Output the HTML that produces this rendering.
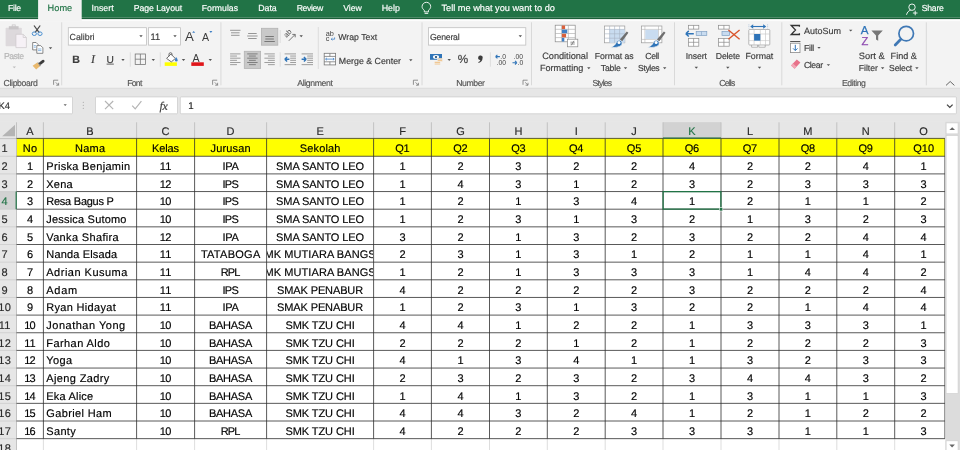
<!DOCTYPE html>
<html lang="id"><head><meta charset="utf-8"><title>Excel</title>
<style>
html,body{margin:0;padding:0;background:#fff;overflow:hidden;}
#app{position:relative;width:960px;height:450px;overflow:hidden;background:#fff;font-family:'Liberation Sans',sans-serif;}
#app div,#app svg{position:absolute;left:0;top:0;}
#app .layer{width:960px;height:450px;will-change:transform;}
.t{position:absolute;white-space:pre;line-height:1;text-rendering:geometricPrecision;-webkit-text-stroke:0.16px currentColor;}
.clip{overflow:hidden;}
</style></head>
<body>
<div id="app">
<svg class="bg" width="960" height="450" viewBox="0 0 960 450">
<rect x="0.00" y="0.00" width="960.00" height="17.70" fill="#217346"/>
<rect x="0.00" y="17.70" width="960.00" height="1.70" fill="#1b6039"/>
<rect x="0.00" y="19.40" width="960.00" height="68.40" fill="#f3f3f3"/>
<rect x="0.00" y="19.50" width="960.00" height="1.60" fill="#fcfcfc"/>
<rect x="38.10" y="0.00" width="43.60" height="21.20" fill="#f3f3f3"/>
<rect x="0.00" y="87.80" width="960.00" height="34.10" fill="#e6e6e6"/>
<rect x="0.00" y="87.80" width="960.00" height="1.10" fill="#dddddd"/>
<rect x="-2.00" y="96.90" width="74.50" height="16.90" fill="#fff" stroke="#cdcdcd" stroke-width="0.8" rx="0.8"/>
<rect x="95.50" y="96.90" width="82.00" height="16.90" fill="#fff" stroke="#cdcdcd" stroke-width="0.8" rx="0.8"/>
<rect x="180.30" y="96.90" width="776.10" height="16.90" fill="#fff" stroke="#cdcdcd" stroke-width="0.8" rx="0.8"/>
<rect x="68.30" y="27.70" width="78.20" height="17.40" fill="#fff" stroke="#c0c0c0" stroke-width="0.8"/>
<rect x="148.40" y="27.70" width="32.20" height="17.40" fill="#fff" stroke="#c0c0c0" stroke-width="0.8"/>
<rect x="428.40" y="27.70" width="97.40" height="17.40" fill="#fff" stroke="#c0c0c0" stroke-width="0.8"/>
<rect x="261.40" y="28.30" width="16.40" height="16.90" fill="#c9c9c9" stroke="#b2b2b2" stroke-width="0.8"/>
<rect x="244.30" y="51.30" width="16.30" height="17.10" fill="#c9c9c9" stroke="#b2b2b2" stroke-width="0.8"/>
<rect x="0.00" y="121.80" width="960.00" height="16.30" fill="#e6e6e6"/>
<rect x="0.00" y="138.10" width="16.50" height="311.90" fill="#e6e6e6"/>
<rect x="663.00" y="122.20" width="58.00" height="15.90" fill="#d2d2d2"/>
<rect x="0.00" y="191.55" width="16.50" height="17.65" fill="#d2d2d2"/>
<rect x="16.50" y="138.00" width="928.40" height="18.25" fill="#ffff00"/>
<line x1="43.4" y1="122.3" x2="43.4" y2="138.6" stroke="#bdbdbd" stroke-width="0.9"/>
<line x1="136.6" y1="122.3" x2="136.6" y2="138.6" stroke="#bdbdbd" stroke-width="0.9"/>
<line x1="194.6" y1="122.3" x2="194.6" y2="138.6" stroke="#bdbdbd" stroke-width="0.9"/>
<line x1="266.6" y1="122.3" x2="266.6" y2="138.6" stroke="#bdbdbd" stroke-width="0.9"/>
<line x1="373.6" y1="122.3" x2="373.6" y2="138.6" stroke="#bdbdbd" stroke-width="0.9"/>
<line x1="431.4" y1="122.3" x2="431.4" y2="138.6" stroke="#bdbdbd" stroke-width="0.9"/>
<line x1="489.5" y1="122.3" x2="489.5" y2="138.6" stroke="#bdbdbd" stroke-width="0.9"/>
<line x1="547.3" y1="122.3" x2="547.3" y2="138.6" stroke="#bdbdbd" stroke-width="0.9"/>
<line x1="605.2" y1="122.3" x2="605.2" y2="138.6" stroke="#bdbdbd" stroke-width="0.9"/>
<line x1="663" y1="122.3" x2="663" y2="138.6" stroke="#bdbdbd" stroke-width="0.9"/>
<line x1="721" y1="122.3" x2="721" y2="138.6" stroke="#bdbdbd" stroke-width="0.9"/>
<line x1="779" y1="122.3" x2="779" y2="138.6" stroke="#bdbdbd" stroke-width="0.9"/>
<line x1="836.8" y1="122.3" x2="836.8" y2="138.6" stroke="#bdbdbd" stroke-width="0.9"/>
<line x1="894.7" y1="122.3" x2="894.7" y2="138.6" stroke="#bdbdbd" stroke-width="0.9"/>
<line x1="16.5" y1="122.3" x2="16.5" y2="450" stroke="#bdbdbd" stroke-width="0.9"/>
<line x1="0" y1="138.6" x2="944.9" y2="138.6" stroke="#bdbdbd" stroke-width="0.9"/>
<line x1="0" y1="156.25" x2="16.5" y2="156.25" stroke="#cbcbcb" stroke-width="0.8"/>
<line x1="0" y1="173.90" x2="16.5" y2="173.90" stroke="#cbcbcb" stroke-width="0.8"/>
<line x1="0" y1="191.55" x2="16.5" y2="191.55" stroke="#cbcbcb" stroke-width="0.8"/>
<line x1="0" y1="209.20" x2="16.5" y2="209.20" stroke="#cbcbcb" stroke-width="0.8"/>
<line x1="0" y1="226.85" x2="16.5" y2="226.85" stroke="#cbcbcb" stroke-width="0.8"/>
<line x1="0" y1="244.50" x2="16.5" y2="244.50" stroke="#cbcbcb" stroke-width="0.8"/>
<line x1="0" y1="262.15" x2="16.5" y2="262.15" stroke="#cbcbcb" stroke-width="0.8"/>
<line x1="0" y1="279.80" x2="16.5" y2="279.80" stroke="#cbcbcb" stroke-width="0.8"/>
<line x1="0" y1="297.45" x2="16.5" y2="297.45" stroke="#cbcbcb" stroke-width="0.8"/>
<line x1="0" y1="315.10" x2="16.5" y2="315.10" stroke="#cbcbcb" stroke-width="0.8"/>
<line x1="0" y1="332.75" x2="16.5" y2="332.75" stroke="#cbcbcb" stroke-width="0.8"/>
<line x1="0" y1="350.40" x2="16.5" y2="350.40" stroke="#cbcbcb" stroke-width="0.8"/>
<line x1="0" y1="368.05" x2="16.5" y2="368.05" stroke="#cbcbcb" stroke-width="0.8"/>
<line x1="0" y1="385.70" x2="16.5" y2="385.70" stroke="#cbcbcb" stroke-width="0.8"/>
<line x1="0" y1="403.35" x2="16.5" y2="403.35" stroke="#cbcbcb" stroke-width="0.8"/>
<line x1="0" y1="421.00" x2="16.5" y2="421.00" stroke="#cbcbcb" stroke-width="0.8"/>
<line x1="0" y1="438.65" x2="16.5" y2="438.65" stroke="#cbcbcb" stroke-width="0.8"/>
<line x1="43.4" y1="438.65" x2="43.4" y2="450" stroke="#d4d4d4" stroke-width="0.8"/>
<line x1="136.6" y1="438.65" x2="136.6" y2="450" stroke="#d4d4d4" stroke-width="0.8"/>
<line x1="194.6" y1="438.65" x2="194.6" y2="450" stroke="#d4d4d4" stroke-width="0.8"/>
<line x1="266.6" y1="438.65" x2="266.6" y2="450" stroke="#d4d4d4" stroke-width="0.8"/>
<line x1="373.6" y1="438.65" x2="373.6" y2="450" stroke="#d4d4d4" stroke-width="0.8"/>
<line x1="431.4" y1="438.65" x2="431.4" y2="450" stroke="#d4d4d4" stroke-width="0.8"/>
<line x1="489.5" y1="438.65" x2="489.5" y2="450" stroke="#d4d4d4" stroke-width="0.8"/>
<line x1="547.3" y1="438.65" x2="547.3" y2="450" stroke="#d4d4d4" stroke-width="0.8"/>
<line x1="605.2" y1="438.65" x2="605.2" y2="450" stroke="#d4d4d4" stroke-width="0.8"/>
<line x1="663" y1="438.65" x2="663" y2="450" stroke="#d4d4d4" stroke-width="0.8"/>
<line x1="721" y1="438.65" x2="721" y2="450" stroke="#d4d4d4" stroke-width="0.8"/>
<line x1="779" y1="438.65" x2="779" y2="450" stroke="#d4d4d4" stroke-width="0.8"/>
<line x1="836.8" y1="438.65" x2="836.8" y2="450" stroke="#d4d4d4" stroke-width="0.8"/>
<line x1="894.7" y1="438.65" x2="894.7" y2="450" stroke="#d4d4d4" stroke-width="0.8"/>
<line x1="16.5" y1="138.4" x2="944.9" y2="138.4" stroke="#55551a" stroke-width="0.9"/>
<line x1="16.5" y1="156.25" x2="944.9" y2="156.25" stroke="#2e2e2e" stroke-width="0.8"/>
<line x1="16.5" y1="173.90" x2="944.9" y2="173.90" stroke="#2e2e2e" stroke-width="0.8"/>
<line x1="16.5" y1="191.55" x2="944.9" y2="191.55" stroke="#2e2e2e" stroke-width="0.8"/>
<line x1="16.5" y1="209.20" x2="944.9" y2="209.20" stroke="#2e2e2e" stroke-width="0.8"/>
<line x1="16.5" y1="226.85" x2="944.9" y2="226.85" stroke="#2e2e2e" stroke-width="0.8"/>
<line x1="16.5" y1="244.50" x2="944.9" y2="244.50" stroke="#2e2e2e" stroke-width="0.8"/>
<line x1="16.5" y1="262.15" x2="944.9" y2="262.15" stroke="#2e2e2e" stroke-width="0.8"/>
<line x1="16.5" y1="279.80" x2="944.9" y2="279.80" stroke="#2e2e2e" stroke-width="0.8"/>
<line x1="16.5" y1="297.45" x2="944.9" y2="297.45" stroke="#2e2e2e" stroke-width="0.8"/>
<line x1="16.5" y1="315.10" x2="944.9" y2="315.10" stroke="#2e2e2e" stroke-width="0.8"/>
<line x1="16.5" y1="332.75" x2="944.9" y2="332.75" stroke="#2e2e2e" stroke-width="0.8"/>
<line x1="16.5" y1="350.40" x2="944.9" y2="350.40" stroke="#2e2e2e" stroke-width="0.8"/>
<line x1="16.5" y1="368.05" x2="944.9" y2="368.05" stroke="#2e2e2e" stroke-width="0.8"/>
<line x1="16.5" y1="385.70" x2="944.9" y2="385.70" stroke="#2e2e2e" stroke-width="0.8"/>
<line x1="16.5" y1="403.35" x2="944.9" y2="403.35" stroke="#2e2e2e" stroke-width="0.8"/>
<line x1="16.5" y1="421.00" x2="944.9" y2="421.00" stroke="#2e2e2e" stroke-width="0.8"/>
<line x1="16.5" y1="438.65" x2="944.9" y2="438.65" stroke="#2e2e2e" stroke-width="0.8"/>
<line x1="43.4" y1="138.6" x2="43.4" y2="438.65" stroke="#2e2e2e" stroke-width="0.8"/>
<line x1="136.6" y1="138.6" x2="136.6" y2="438.65" stroke="#2e2e2e" stroke-width="0.8"/>
<line x1="194.6" y1="138.6" x2="194.6" y2="438.65" stroke="#2e2e2e" stroke-width="0.8"/>
<line x1="266.6" y1="138.6" x2="266.6" y2="438.65" stroke="#2e2e2e" stroke-width="0.8"/>
<line x1="373.6" y1="138.6" x2="373.6" y2="438.65" stroke="#2e2e2e" stroke-width="0.8"/>
<line x1="431.4" y1="138.6" x2="431.4" y2="438.65" stroke="#2e2e2e" stroke-width="0.8"/>
<line x1="489.5" y1="138.6" x2="489.5" y2="438.65" stroke="#2e2e2e" stroke-width="0.8"/>
<line x1="547.3" y1="138.6" x2="547.3" y2="438.65" stroke="#2e2e2e" stroke-width="0.8"/>
<line x1="605.2" y1="138.6" x2="605.2" y2="438.65" stroke="#2e2e2e" stroke-width="0.8"/>
<line x1="663" y1="138.6" x2="663" y2="438.65" stroke="#2e2e2e" stroke-width="0.8"/>
<line x1="721" y1="138.6" x2="721" y2="438.65" stroke="#2e2e2e" stroke-width="0.8"/>
<line x1="779" y1="138.6" x2="779" y2="438.65" stroke="#2e2e2e" stroke-width="0.8"/>
<line x1="836.8" y1="138.6" x2="836.8" y2="438.65" stroke="#2e2e2e" stroke-width="0.8"/>
<line x1="894.7" y1="138.6" x2="894.7" y2="438.65" stroke="#2e2e2e" stroke-width="0.8"/>
<line x1="944.9" y1="138.6" x2="944.9" y2="438.65" stroke="#2e2e2e" stroke-width="0.8"/>
<!-- selection -->
<line x1="663" y1="138.0" x2="721" y2="138.0" stroke="#217346" stroke-width="1.2"/>
<line x1="16.2" y1="191.55" x2="16.2" y2="209.20" stroke="#217346" stroke-width="1.2"/>
<rect x="663.1" y="191.65" width="57.8" height="17.45" fill="none" stroke="#217346" stroke-width="1.3"/>
<rect x="719.4" y="207.60" width="3.4" height="3.4" fill="#217346" stroke="#fff" stroke-width="0.6"/>
<rect x="945.30" y="121.80" width="15.10" height="328.20" fill="#dcdcdc"/>
</svg>
<div class="layer sheet">
<div class="row r1"><span class="t" style="left:22.75px;top:144px;font-size:11.0px;color:#000;letter-spacing:0.338px;">No</span><span class="t" style="left:75.00px;top:144px;font-size:11.0px;color:#000;letter-spacing:0.219px;">Nama</span><span class="t" style="left:152.10px;top:144px;font-size:11.0px;color:#000;letter-spacing:-0.133px;">Kelas</span><span class="t" style="left:210.60px;top:144px;font-size:11.0px;color:#000;letter-spacing:0.143px;">Jurusan</span><span class="t" style="left:299.80px;top:144px;font-size:11.0px;color:#000;letter-spacing:0.139px;">Sekolah</span><span class="t" style="left:395.25px;top:144px;font-size:11.0px;color:#000;letter-spacing:-0.188px;">Q1</span><span class="t" style="left:453.20px;top:144px;font-size:11.0px;color:#000;letter-spacing:-0.188px;">Q2</span><span class="t" style="left:511.15px;top:144px;font-size:11.0px;color:#000;letter-spacing:-0.188px;">Q3</span><span class="t" style="left:569.00px;top:144px;font-size:11.0px;color:#000;letter-spacing:-0.188px;">Q4</span><span class="t" style="left:626.85px;top:144px;font-size:11.0px;color:#000;letter-spacing:-0.188px;">Q5</span><span class="t" style="left:684.75px;top:144px;font-size:11.0px;color:#000;letter-spacing:-0.188px;">Q6</span><span class="t" style="left:742.75px;top:144px;font-size:11.0px;color:#000;letter-spacing:-0.188px;">Q7</span><span class="t" style="left:800.65px;top:144px;font-size:11.0px;color:#000;letter-spacing:-0.188px;">Q8</span><span class="t" style="left:858.50px;top:144px;font-size:11.0px;color:#000;letter-spacing:-0.188px;">Q9</span><span class="t" style="left:913.20px;top:144px;font-size:11.0px;color:#000;letter-spacing:0.052px;">Q10</span></div>
<div class="row r2"><span class="t" style="left:26.89px;top:162px;font-size:11.0px;color:#000;">1</span><span class="t" style="left:46.30px;top:162px;font-size:11.0px;color:#000;letter-spacing:0.315px;">Priska Benjamin</span><span class="t" style="left:159.85px;top:162px;font-size:11.0px;color:#000;letter-spacing:0.078px;">11</span><span class="t" style="left:222.45px;top:162px;font-size:11.0px;color:#000;letter-spacing:-0.311px;">IPA</span><span class="t" style="left:276.05px;top:162px;font-size:11.0px;color:#000;letter-spacing:-0.080px;">SMA SANTO LEO</span><span class="t" style="left:399.44px;top:162px;font-size:11.0px;color:#000;">1</span><span class="t" style="left:457.39px;top:162px;font-size:11.0px;color:#000;">2</span><span class="t" style="left:515.34px;top:162px;font-size:11.0px;color:#000;">3</span><span class="t" style="left:573.19px;top:162px;font-size:11.0px;color:#000;">2</span><span class="t" style="left:631.04px;top:162px;font-size:11.0px;color:#000;">2</span><span class="t" style="left:688.94px;top:162px;font-size:11.0px;color:#000;">4</span><span class="t" style="left:746.94px;top:162px;font-size:11.0px;color:#000;">2</span><span class="t" style="left:804.84px;top:162px;font-size:11.0px;color:#000;">2</span><span class="t" style="left:862.69px;top:162px;font-size:11.0px;color:#000;">4</span><span class="t" style="left:920.59px;top:162px;font-size:11.0px;color:#000;">1</span></div>
<div class="row r3"><span class="t" style="left:26.89px;top:180px;font-size:11.0px;color:#000;">2</span><span class="t" style="left:46.30px;top:180px;font-size:11.0px;color:#000;letter-spacing:0.199px;">Xena</span><span class="t" style="left:159.85px;top:180px;font-size:11.0px;color:#000;letter-spacing:-0.750px;">12</span><span class="t" style="left:222.45px;top:180px;font-size:11.0px;color:#000;letter-spacing:-0.717px;">IPS</span><span class="t" style="left:276.05px;top:180px;font-size:11.0px;color:#000;letter-spacing:-0.080px;">SMA SANTO LEO</span><span class="t" style="left:399.44px;top:180px;font-size:11.0px;color:#000;">1</span><span class="t" style="left:457.39px;top:180px;font-size:11.0px;color:#000;">4</span><span class="t" style="left:515.34px;top:180px;font-size:11.0px;color:#000;">3</span><span class="t" style="left:573.19px;top:180px;font-size:11.0px;color:#000;">1</span><span class="t" style="left:631.04px;top:180px;font-size:11.0px;color:#000;">2</span><span class="t" style="left:688.94px;top:180px;font-size:11.0px;color:#000;">3</span><span class="t" style="left:746.94px;top:180px;font-size:11.0px;color:#000;">2</span><span class="t" style="left:804.84px;top:180px;font-size:11.0px;color:#000;">3</span><span class="t" style="left:862.69px;top:180px;font-size:11.0px;color:#000;">3</span><span class="t" style="left:920.59px;top:180px;font-size:11.0px;color:#000;">3</span></div>
<div class="row r4"><span class="t" style="left:26.89px;top:197px;font-size:11.0px;color:#000;">3</span><span class="t" style="left:46.30px;top:197px;font-size:11.0px;color:#000;letter-spacing:-0.248px;">Resa Bagus P</span><span class="t" style="left:159.85px;top:197px;font-size:11.0px;color:#000;letter-spacing:-0.750px;">10</span><span class="t" style="left:222.45px;top:197px;font-size:11.0px;color:#000;letter-spacing:-0.717px;">IPS</span><span class="t" style="left:276.05px;top:197px;font-size:11.0px;color:#000;letter-spacing:-0.080px;">SMA SANTO LEO</span><span class="t" style="left:399.44px;top:197px;font-size:11.0px;color:#000;">1</span><span class="t" style="left:457.39px;top:197px;font-size:11.0px;color:#000;">2</span><span class="t" style="left:515.34px;top:197px;font-size:11.0px;color:#000;">1</span><span class="t" style="left:573.19px;top:197px;font-size:11.0px;color:#000;">3</span><span class="t" style="left:631.04px;top:197px;font-size:11.0px;color:#000;">4</span><span class="t" style="left:688.94px;top:197px;font-size:11.0px;color:#000;">1</span><span class="t" style="left:746.94px;top:197px;font-size:11.0px;color:#000;">2</span><span class="t" style="left:804.84px;top:197px;font-size:11.0px;color:#000;">1</span><span class="t" style="left:862.69px;top:197px;font-size:11.0px;color:#000;">1</span><span class="t" style="left:920.59px;top:197px;font-size:11.0px;color:#000;">2</span></div>
<div class="row r5"><span class="t" style="left:26.89px;top:215px;font-size:11.0px;color:#000;">4</span><span class="t" style="left:46.30px;top:215px;font-size:11.0px;color:#000;letter-spacing:0.196px;">Jessica Sutomo</span><span class="t" style="left:159.85px;top:215px;font-size:11.0px;color:#000;letter-spacing:-0.750px;">10</span><span class="t" style="left:222.45px;top:215px;font-size:11.0px;color:#000;letter-spacing:-0.717px;">IPS</span><span class="t" style="left:276.05px;top:215px;font-size:11.0px;color:#000;letter-spacing:-0.080px;">SMA SANTO LEO</span><span class="t" style="left:399.44px;top:215px;font-size:11.0px;color:#000;">1</span><span class="t" style="left:457.39px;top:215px;font-size:11.0px;color:#000;">2</span><span class="t" style="left:515.34px;top:215px;font-size:11.0px;color:#000;">3</span><span class="t" style="left:573.19px;top:215px;font-size:11.0px;color:#000;">1</span><span class="t" style="left:631.04px;top:215px;font-size:11.0px;color:#000;">3</span><span class="t" style="left:688.94px;top:215px;font-size:11.0px;color:#000;">2</span><span class="t" style="left:746.94px;top:215px;font-size:11.0px;color:#000;">1</span><span class="t" style="left:804.84px;top:215px;font-size:11.0px;color:#000;">3</span><span class="t" style="left:862.69px;top:215px;font-size:11.0px;color:#000;">2</span><span class="t" style="left:920.59px;top:215px;font-size:11.0px;color:#000;">3</span></div>
<div class="row r6"><span class="t" style="left:26.89px;top:233px;font-size:11.0px;color:#000;">5</span><span class="t" style="left:46.30px;top:233px;font-size:11.0px;color:#000;letter-spacing:0.342px;">Vanka Shafira</span><span class="t" style="left:159.85px;top:233px;font-size:11.0px;color:#000;letter-spacing:-0.750px;">12</span><span class="t" style="left:222.45px;top:233px;font-size:11.0px;color:#000;letter-spacing:-0.311px;">IPA</span><span class="t" style="left:276.05px;top:233px;font-size:11.0px;color:#000;letter-spacing:-0.080px;">SMA SANTO LEO</span><span class="t" style="left:399.44px;top:233px;font-size:11.0px;color:#000;">3</span><span class="t" style="left:457.39px;top:233px;font-size:11.0px;color:#000;">2</span><span class="t" style="left:515.34px;top:233px;font-size:11.0px;color:#000;">1</span><span class="t" style="left:573.19px;top:233px;font-size:11.0px;color:#000;">3</span><span class="t" style="left:631.04px;top:233px;font-size:11.0px;color:#000;">2</span><span class="t" style="left:688.94px;top:233px;font-size:11.0px;color:#000;">3</span><span class="t" style="left:746.94px;top:233px;font-size:11.0px;color:#000;">2</span><span class="t" style="left:804.84px;top:233px;font-size:11.0px;color:#000;">2</span><span class="t" style="left:862.69px;top:233px;font-size:11.0px;color:#000;">4</span><span class="t" style="left:920.59px;top:233px;font-size:11.0px;color:#000;">4</span></div>
<div class="row r7"><span class="t" style="left:26.89px;top:250px;font-size:11.0px;color:#000;">6</span><span class="t" style="left:46.30px;top:250px;font-size:11.0px;color:#000;letter-spacing:0.163px;">Nanda Elsada</span><span class="t" style="left:159.85px;top:250px;font-size:11.0px;color:#000;letter-spacing:0.078px;">11</span><span class="t" style="left:200.90px;top:250px;font-size:11.0px;color:#000;letter-spacing:0.278px;">TATABOGA</span><div class="clip" style="left:267.20px;top:244px;width:106.00px;height:18.65px"><span class="t" style="left:-10.10px;top:6px;font-size:11.0px;color:#000;letter-spacing:0.076px;">SMK MUTIARA BANGSA</span></div><span class="t" style="left:399.44px;top:250px;font-size:11.0px;color:#000;">2</span><span class="t" style="left:457.39px;top:250px;font-size:11.0px;color:#000;">3</span><span class="t" style="left:515.34px;top:250px;font-size:11.0px;color:#000;">1</span><span class="t" style="left:573.19px;top:250px;font-size:11.0px;color:#000;">3</span><span class="t" style="left:631.04px;top:250px;font-size:11.0px;color:#000;">1</span><span class="t" style="left:688.94px;top:250px;font-size:11.0px;color:#000;">2</span><span class="t" style="left:746.94px;top:250px;font-size:11.0px;color:#000;">1</span><span class="t" style="left:804.84px;top:250px;font-size:11.0px;color:#000;">1</span><span class="t" style="left:862.69px;top:250px;font-size:11.0px;color:#000;">4</span><span class="t" style="left:920.59px;top:250px;font-size:11.0px;color:#000;">1</span></div>
<div class="row r8"><span class="t" style="left:26.89px;top:268px;font-size:11.0px;color:#000;">7</span><span class="t" style="left:46.30px;top:268px;font-size:11.0px;color:#000;letter-spacing:0.490px;">Adrian Kusuma</span><span class="t" style="left:159.85px;top:268px;font-size:11.0px;color:#000;letter-spacing:0.078px;">11</span><span class="t" style="left:220.80px;top:268px;font-size:11.0px;color:#000;letter-spacing:-0.903px;">RPL</span><div class="clip" style="left:267.20px;top:262px;width:106.00px;height:18.65px"><span class="t" style="left:-10.10px;top:6px;font-size:11.0px;color:#000;letter-spacing:0.076px;">SMK MUTIARA BANGSA</span></div><span class="t" style="left:399.44px;top:268px;font-size:11.0px;color:#000;">1</span><span class="t" style="left:457.39px;top:268px;font-size:11.0px;color:#000;">2</span><span class="t" style="left:515.34px;top:268px;font-size:11.0px;color:#000;">1</span><span class="t" style="left:573.19px;top:268px;font-size:11.0px;color:#000;">3</span><span class="t" style="left:631.04px;top:268px;font-size:11.0px;color:#000;">3</span><span class="t" style="left:688.94px;top:268px;font-size:11.0px;color:#000;">3</span><span class="t" style="left:746.94px;top:268px;font-size:11.0px;color:#000;">1</span><span class="t" style="left:804.84px;top:268px;font-size:11.0px;color:#000;">4</span><span class="t" style="left:862.69px;top:268px;font-size:11.0px;color:#000;">4</span><span class="t" style="left:920.59px;top:268px;font-size:11.0px;color:#000;">2</span></div>
<div class="row r9"><span class="t" style="left:26.89px;top:286px;font-size:11.0px;color:#000;">8</span><span class="t" style="left:46.30px;top:286px;font-size:11.0px;color:#000;letter-spacing:0.717px;">Adam</span><span class="t" style="left:159.85px;top:286px;font-size:11.0px;color:#000;letter-spacing:0.078px;">11</span><span class="t" style="left:222.45px;top:286px;font-size:11.0px;color:#000;letter-spacing:-0.717px;">IPS</span><span class="t" style="left:277.05px;top:286px;font-size:11.0px;color:#000;letter-spacing:-0.120px;">SMAK PENABUR</span><span class="t" style="left:399.44px;top:286px;font-size:11.0px;color:#000;">4</span><span class="t" style="left:457.39px;top:286px;font-size:11.0px;color:#000;">2</span><span class="t" style="left:515.34px;top:286px;font-size:11.0px;color:#000;">2</span><span class="t" style="left:573.19px;top:286px;font-size:11.0px;color:#000;">2</span><span class="t" style="left:631.04px;top:286px;font-size:11.0px;color:#000;">2</span><span class="t" style="left:688.94px;top:286px;font-size:11.0px;color:#000;">3</span><span class="t" style="left:746.94px;top:286px;font-size:11.0px;color:#000;">2</span><span class="t" style="left:804.84px;top:286px;font-size:11.0px;color:#000;">2</span><span class="t" style="left:862.69px;top:286px;font-size:11.0px;color:#000;">2</span><span class="t" style="left:920.59px;top:286px;font-size:11.0px;color:#000;">4</span></div>
<div class="row r10"><span class="t" style="left:26.89px;top:303px;font-size:11.0px;color:#000;">9</span><span class="t" style="left:46.30px;top:303px;font-size:11.0px;color:#000;letter-spacing:0.314px;">Ryan Hidayat</span><span class="t" style="left:159.85px;top:303px;font-size:11.0px;color:#000;letter-spacing:0.078px;">11</span><span class="t" style="left:222.45px;top:303px;font-size:11.0px;color:#000;letter-spacing:-0.311px;">IPA</span><span class="t" style="left:277.05px;top:303px;font-size:11.0px;color:#000;letter-spacing:-0.120px;">SMAK PENABUR</span><span class="t" style="left:399.44px;top:303px;font-size:11.0px;color:#000;">1</span><span class="t" style="left:457.39px;top:303px;font-size:11.0px;color:#000;">2</span><span class="t" style="left:515.34px;top:303px;font-size:11.0px;color:#000;">3</span><span class="t" style="left:573.19px;top:303px;font-size:11.0px;color:#000;">1</span><span class="t" style="left:631.04px;top:303px;font-size:11.0px;color:#000;">3</span><span class="t" style="left:688.94px;top:303px;font-size:11.0px;color:#000;">2</span><span class="t" style="left:746.94px;top:303px;font-size:11.0px;color:#000;">2</span><span class="t" style="left:804.84px;top:303px;font-size:11.0px;color:#000;">1</span><span class="t" style="left:862.69px;top:303px;font-size:11.0px;color:#000;">4</span><span class="t" style="left:920.59px;top:303px;font-size:11.0px;color:#000;">4</span></div>
<div class="row r11"><span class="t" style="left:24.20px;top:321px;font-size:11.0px;color:#000;letter-spacing:-0.750px;">10</span><span class="t" style="left:46.30px;top:321px;font-size:11.0px;color:#000;letter-spacing:0.507px;">Jonathan Yong</span><span class="t" style="left:159.85px;top:321px;font-size:11.0px;color:#000;letter-spacing:-0.750px;">10</span><span class="t" style="left:208.95px;top:321px;font-size:11.0px;color:#000;letter-spacing:-0.268px;">BAHASA</span><span class="t" style="left:285.50px;top:321px;font-size:11.0px;color:#000;letter-spacing:-0.088px;">SMK TZU CHI</span><span class="t" style="left:399.44px;top:321px;font-size:11.0px;color:#000;">4</span><span class="t" style="left:457.39px;top:321px;font-size:11.0px;color:#000;">4</span><span class="t" style="left:515.34px;top:321px;font-size:11.0px;color:#000;">1</span><span class="t" style="left:573.19px;top:321px;font-size:11.0px;color:#000;">2</span><span class="t" style="left:631.04px;top:321px;font-size:11.0px;color:#000;">2</span><span class="t" style="left:688.94px;top:321px;font-size:11.0px;color:#000;">1</span><span class="t" style="left:746.94px;top:321px;font-size:11.0px;color:#000;">3</span><span class="t" style="left:804.84px;top:321px;font-size:11.0px;color:#000;">3</span><span class="t" style="left:862.69px;top:321px;font-size:11.0px;color:#000;">3</span><span class="t" style="left:920.59px;top:321px;font-size:11.0px;color:#000;">1</span></div>
<div class="row r12"><span class="t" style="left:24.20px;top:339px;font-size:11.0px;color:#000;letter-spacing:0.078px;">11</span><span class="t" style="left:46.30px;top:339px;font-size:11.0px;color:#000;letter-spacing:0.427px;">Farhan Aldo</span><span class="t" style="left:159.85px;top:339px;font-size:11.0px;color:#000;letter-spacing:-0.750px;">10</span><span class="t" style="left:208.95px;top:339px;font-size:11.0px;color:#000;letter-spacing:-0.268px;">BAHASA</span><span class="t" style="left:285.50px;top:339px;font-size:11.0px;color:#000;letter-spacing:-0.088px;">SMK TZU CHI</span><span class="t" style="left:399.44px;top:339px;font-size:11.0px;color:#000;">2</span><span class="t" style="left:457.39px;top:339px;font-size:11.0px;color:#000;">2</span><span class="t" style="left:515.34px;top:339px;font-size:11.0px;color:#000;">2</span><span class="t" style="left:573.19px;top:339px;font-size:11.0px;color:#000;">1</span><span class="t" style="left:631.04px;top:339px;font-size:11.0px;color:#000;">2</span><span class="t" style="left:688.94px;top:339px;font-size:11.0px;color:#000;">1</span><span class="t" style="left:746.94px;top:339px;font-size:11.0px;color:#000;">2</span><span class="t" style="left:804.84px;top:339px;font-size:11.0px;color:#000;">2</span><span class="t" style="left:862.69px;top:339px;font-size:11.0px;color:#000;">2</span><span class="t" style="left:920.59px;top:339px;font-size:11.0px;color:#000;">3</span></div>
<div class="row r13"><span class="t" style="left:24.20px;top:356px;font-size:11.0px;color:#000;letter-spacing:-0.750px;">12</span><span class="t" style="left:46.30px;top:356px;font-size:11.0px;color:#000;letter-spacing:0.371px;">Yoga</span><span class="t" style="left:159.85px;top:356px;font-size:11.0px;color:#000;letter-spacing:-0.750px;">10</span><span class="t" style="left:208.95px;top:356px;font-size:11.0px;color:#000;letter-spacing:-0.268px;">BAHASA</span><span class="t" style="left:285.50px;top:356px;font-size:11.0px;color:#000;letter-spacing:-0.088px;">SMK TZU CHI</span><span class="t" style="left:399.44px;top:356px;font-size:11.0px;color:#000;">4</span><span class="t" style="left:457.39px;top:356px;font-size:11.0px;color:#000;">1</span><span class="t" style="left:515.34px;top:356px;font-size:11.0px;color:#000;">3</span><span class="t" style="left:573.19px;top:356px;font-size:11.0px;color:#000;">4</span><span class="t" style="left:631.04px;top:356px;font-size:11.0px;color:#000;">1</span><span class="t" style="left:688.94px;top:356px;font-size:11.0px;color:#000;">1</span><span class="t" style="left:746.94px;top:356px;font-size:11.0px;color:#000;">3</span><span class="t" style="left:804.84px;top:356px;font-size:11.0px;color:#000;">2</span><span class="t" style="left:862.69px;top:356px;font-size:11.0px;color:#000;">3</span><span class="t" style="left:920.59px;top:356px;font-size:11.0px;color:#000;">3</span></div>
<div class="row r14"><span class="t" style="left:24.20px;top:374px;font-size:11.0px;color:#000;letter-spacing:-0.750px;">13</span><span class="t" style="left:46.30px;top:374px;font-size:11.0px;color:#000;letter-spacing:0.359px;">Ajeng Zadry</span><span class="t" style="left:159.85px;top:374px;font-size:11.0px;color:#000;letter-spacing:-0.750px;">10</span><span class="t" style="left:208.95px;top:374px;font-size:11.0px;color:#000;letter-spacing:-0.268px;">BAHASA</span><span class="t" style="left:285.50px;top:374px;font-size:11.0px;color:#000;letter-spacing:-0.088px;">SMK TZU CHI</span><span class="t" style="left:399.44px;top:374px;font-size:11.0px;color:#000;">2</span><span class="t" style="left:457.39px;top:374px;font-size:11.0px;color:#000;">3</span><span class="t" style="left:515.34px;top:374px;font-size:11.0px;color:#000;">2</span><span class="t" style="left:573.19px;top:374px;font-size:11.0px;color:#000;">3</span><span class="t" style="left:631.04px;top:374px;font-size:11.0px;color:#000;">2</span><span class="t" style="left:688.94px;top:374px;font-size:11.0px;color:#000;">3</span><span class="t" style="left:746.94px;top:374px;font-size:11.0px;color:#000;">4</span><span class="t" style="left:804.84px;top:374px;font-size:11.0px;color:#000;">4</span><span class="t" style="left:862.69px;top:374px;font-size:11.0px;color:#000;">3</span><span class="t" style="left:920.59px;top:374px;font-size:11.0px;color:#000;">2</span></div>
<div class="row r15"><span class="t" style="left:24.20px;top:392px;font-size:11.0px;color:#000;letter-spacing:-0.750px;">14</span><span class="t" style="left:46.30px;top:392px;font-size:11.0px;color:#000;letter-spacing:0.194px;">Eka Alice</span><span class="t" style="left:159.85px;top:392px;font-size:11.0px;color:#000;letter-spacing:-0.750px;">10</span><span class="t" style="left:208.95px;top:392px;font-size:11.0px;color:#000;letter-spacing:-0.268px;">BAHASA</span><span class="t" style="left:285.50px;top:392px;font-size:11.0px;color:#000;letter-spacing:-0.088px;">SMK TZU CHI</span><span class="t" style="left:399.44px;top:392px;font-size:11.0px;color:#000;">1</span><span class="t" style="left:457.39px;top:392px;font-size:11.0px;color:#000;">4</span><span class="t" style="left:515.34px;top:392px;font-size:11.0px;color:#000;">1</span><span class="t" style="left:573.19px;top:392px;font-size:11.0px;color:#000;">3</span><span class="t" style="left:631.04px;top:392px;font-size:11.0px;color:#000;">2</span><span class="t" style="left:688.94px;top:392px;font-size:11.0px;color:#000;">1</span><span class="t" style="left:746.94px;top:392px;font-size:11.0px;color:#000;">3</span><span class="t" style="left:804.84px;top:392px;font-size:11.0px;color:#000;">1</span><span class="t" style="left:862.69px;top:392px;font-size:11.0px;color:#000;">1</span><span class="t" style="left:920.59px;top:392px;font-size:11.0px;color:#000;">3</span></div>
<div class="row r16"><span class="t" style="left:24.20px;top:409px;font-size:11.0px;color:#000;letter-spacing:-0.750px;">15</span><span class="t" style="left:46.30px;top:409px;font-size:11.0px;color:#000;letter-spacing:0.355px;">Gabriel Ham</span><span class="t" style="left:159.85px;top:409px;font-size:11.0px;color:#000;letter-spacing:-0.750px;">10</span><span class="t" style="left:208.95px;top:409px;font-size:11.0px;color:#000;letter-spacing:-0.268px;">BAHASA</span><span class="t" style="left:285.50px;top:409px;font-size:11.0px;color:#000;letter-spacing:-0.088px;">SMK TZU CHI</span><span class="t" style="left:399.44px;top:409px;font-size:11.0px;color:#000;">4</span><span class="t" style="left:457.39px;top:409px;font-size:11.0px;color:#000;">4</span><span class="t" style="left:515.34px;top:409px;font-size:11.0px;color:#000;">3</span><span class="t" style="left:573.19px;top:409px;font-size:11.0px;color:#000;">2</span><span class="t" style="left:631.04px;top:409px;font-size:11.0px;color:#000;">4</span><span class="t" style="left:688.94px;top:409px;font-size:11.0px;color:#000;">1</span><span class="t" style="left:746.94px;top:409px;font-size:11.0px;color:#000;">2</span><span class="t" style="left:804.84px;top:409px;font-size:11.0px;color:#000;">1</span><span class="t" style="left:862.69px;top:409px;font-size:11.0px;color:#000;">2</span><span class="t" style="left:920.59px;top:409px;font-size:11.0px;color:#000;">2</span></div>
<div class="row r17"><span class="t" style="left:24.20px;top:427px;font-size:11.0px;color:#000;letter-spacing:-0.750px;">16</span><span class="t" style="left:46.30px;top:427px;font-size:11.0px;color:#000;letter-spacing:0.315px;">Santy</span><span class="t" style="left:159.85px;top:427px;font-size:11.0px;color:#000;letter-spacing:-0.750px;">10</span><span class="t" style="left:220.80px;top:427px;font-size:11.0px;color:#000;letter-spacing:-0.903px;">RPL</span><span class="t" style="left:285.50px;top:427px;font-size:11.0px;color:#000;letter-spacing:-0.088px;">SMK TZU CHI</span><span class="t" style="left:399.44px;top:427px;font-size:11.0px;color:#000;">4</span><span class="t" style="left:457.39px;top:427px;font-size:11.0px;color:#000;">2</span><span class="t" style="left:515.34px;top:427px;font-size:11.0px;color:#000;">2</span><span class="t" style="left:573.19px;top:427px;font-size:11.0px;color:#000;">2</span><span class="t" style="left:631.04px;top:427px;font-size:11.0px;color:#000;">3</span><span class="t" style="left:688.94px;top:427px;font-size:11.0px;color:#000;">3</span><span class="t" style="left:746.94px;top:427px;font-size:11.0px;color:#000;">3</span><span class="t" style="left:804.84px;top:427px;font-size:11.0px;color:#000;">1</span><span class="t" style="left:862.69px;top:427px;font-size:11.0px;color:#000;">1</span><span class="t" style="left:920.59px;top:427px;font-size:11.0px;color:#000;">3</span></div>
<div class="colheads"><span class="t" style="left:26.28px;top:127px;font-size:11.0px;color:#2a2a2a;">A</span><span class="t" style="left:86.33px;top:127px;font-size:11.0px;color:#2a2a2a;">B</span><span class="t" style="left:161.62px;top:127px;font-size:11.0px;color:#2a2a2a;">C</span><span class="t" style="left:226.62px;top:127px;font-size:11.0px;color:#2a2a2a;">D</span><span class="t" style="left:316.43px;top:127px;font-size:11.0px;color:#2a2a2a;">E</span><span class="t" style="left:399.13px;top:127px;font-size:11.0px;color:#2a2a2a;">F</span><span class="t" style="left:456.17px;top:127px;font-size:11.0px;color:#2a2a2a;">G</span><span class="t" style="left:514.42px;top:127px;font-size:11.0px;color:#2a2a2a;">H</span><span class="t" style="left:574.72px;top:127px;font-size:11.0px;color:#2a2a2a;">I</span><span class="t" style="left:631.35px;top:127px;font-size:11.0px;color:#2a2a2a;">J</span><span class="t" style="left:688.33px;top:127px;font-size:11.0px;color:#217346;">K</span><span class="t" style="left:746.94px;top:127px;font-size:11.0px;color:#2a2a2a;">L</span><span class="t" style="left:803.31px;top:127px;font-size:11.0px;color:#2a2a2a;">M</span><span class="t" style="left:861.77px;top:127px;font-size:11.0px;color:#2a2a2a;">N</span><span class="t" style="left:919.37px;top:127px;font-size:11.0px;color:#2a2a2a;">O</span></div>
<div class="rowheads"><span class="t" style="left:1.54px;top:144px;font-size:11.0px;color:#2a2a2a;">1</span><span class="t" style="left:1.54px;top:162px;font-size:11.0px;color:#2a2a2a;">2</span><span class="t" style="left:1.54px;top:180px;font-size:11.0px;color:#2a2a2a;">3</span><span class="t" style="left:1.54px;top:197px;font-size:11.0px;color:#217346;">4</span><span class="t" style="left:1.54px;top:215px;font-size:11.0px;color:#2a2a2a;">5</span><span class="t" style="left:1.54px;top:233px;font-size:11.0px;color:#2a2a2a;">6</span><span class="t" style="left:1.54px;top:250px;font-size:11.0px;color:#2a2a2a;">7</span><span class="t" style="left:1.54px;top:268px;font-size:11.0px;color:#2a2a2a;">8</span><span class="t" style="left:1.54px;top:286px;font-size:11.0px;color:#2a2a2a;">9</span><span class="t" style="left:-1.65px;top:303px;font-size:11.0px;color:#2a2a2a;letter-spacing:0.245px;">10</span><span class="t" style="left:-1.23px;top:321px;font-size:11.0px;color:#2a2a2a;letter-spacing:0.228px;">11</span><span class="t" style="left:-1.65px;top:339px;font-size:11.0px;color:#2a2a2a;letter-spacing:0.245px;">12</span><span class="t" style="left:-1.65px;top:356px;font-size:11.0px;color:#2a2a2a;letter-spacing:0.245px;">13</span><span class="t" style="left:-1.65px;top:374px;font-size:11.0px;color:#2a2a2a;letter-spacing:0.245px;">14</span><span class="t" style="left:-1.65px;top:392px;font-size:11.0px;color:#2a2a2a;letter-spacing:0.245px;">15</span><span class="t" style="left:-1.65px;top:409px;font-size:11.0px;color:#2a2a2a;letter-spacing:0.245px;">16</span><span class="t" style="left:-1.65px;top:427px;font-size:11.0px;color:#2a2a2a;letter-spacing:0.245px;">17</span><span class="t" style="left:-1.65px;top:444px;font-size:11.0px;color:#2a2a2a;letter-spacing:0.245px;">18</span></div>
</div>
<div class="layer chrome">
<div class="tabs"><span class="t" style="left:8.10px;top:4px;font-size:8.7px;color:#fff;letter-spacing:-0.302px;">File</span><span class="t" style="left:47.60px;top:4px;font-size:9.2px;color:#217346;letter-spacing:0.028px;">Home</span><span class="t" style="left:91.50px;top:4px;font-size:8.8px;color:#fff;letter-spacing:0.023px;">Insert</span><span class="t" style="left:133.70px;top:4px;font-size:8.7px;color:#fff;letter-spacing:-0.030px;">Page Layout</span><span class="t" style="left:201.80px;top:4px;font-size:8.7px;color:#fff;">Formulas</span><span class="t" style="left:258.20px;top:4px;font-size:8.8px;color:#fff;letter-spacing:-0.026px;">Data</span><span class="t" style="left:296.70px;top:4px;font-size:8.7px;color:#fff;letter-spacing:-0.398px;">Review</span><span class="t" style="left:343.20px;top:4px;font-size:8.7px;color:#fff;letter-spacing:-0.026px;">View</span><span class="t" style="left:381.70px;top:4px;font-size:8.9px;color:#fff;letter-spacing:-0.030px;">Help</span><span class="t" style="left:441.50px;top:4px;font-size:9.2px;color:#fff;">Tell me what you want to do</span><span class="t" style="left:921.80px;top:4px;font-size:8.7px;color:#fff;letter-spacing:-0.275px;">Share</span></div>
<div class="ribbon"><div class="group-labels"><span class="t" style="left:3.60px;top:79px;font-size:8.7px;color:#555;letter-spacing:-0.361px;">Clipboard</span><span class="t" style="left:127.20px;top:79px;font-size:8.7px;color:#555;letter-spacing:-0.730px;">Font</span><span class="t" style="left:297.30px;top:79px;font-size:8.7px;color:#555;letter-spacing:-0.392px;">Alignment</span><span class="t" style="left:456.20px;top:79px;font-size:8.7px;color:#555;letter-spacing:-0.422px;">Number</span><span class="t" style="left:592.50px;top:79px;font-size:8.7px;color:#555;letter-spacing:-0.794px;">Styles</span><span class="t" style="left:719.20px;top:79px;font-size:8.7px;color:#555;letter-spacing:-0.803px;">Cells</span><span class="t" style="left:841.90px;top:79px;font-size:8.7px;color:#555;letter-spacing:-0.428px;">Editing</span></div><div class="buttons"><span class="t" style="left:3.90px;top:52px;font-size:8.7px;color:#b4b4b4;letter-spacing:-0.531px;">Paste</span><span class="t" style="left:69.60px;top:33px;font-size:8.8px;color:#3c3c3c;">Calibri</span><span class="t" style="left:150.50px;top:33px;font-size:9.3px;color:#3c3c3c;letter-spacing:0.045px;">11</span><span class="t" style="left:338.30px;top:33px;font-size:8.7px;color:#3c3c3c;letter-spacing:0.012px;">Wrap Text</span><span class="t" style="left:338.80px;top:57px;font-size:8.8px;color:#3c3c3c;letter-spacing:0.012px;">Merge &amp; Center</span><span class="t" style="left:430.10px;top:33px;font-size:8.7px;color:#3c3c3c;letter-spacing:-0.235px;">General</span><span class="t" style="left:542.20px;top:52px;font-size:9.2px;color:#3c3c3c;letter-spacing:-0.018px;">Conditional</span><span class="t" style="left:540.00px;top:64px;font-size:9.1px;color:#3c3c3c;letter-spacing:-0.016px;">Formatting</span><span class="t" style="left:594.70px;top:52px;font-size:8.7px;color:#3c3c3c;letter-spacing:-0.014px;">Format as</span><span class="t" style="left:600.80px;top:64px;font-size:8.7px;color:#3c3c3c;letter-spacing:-0.194px;">Table</span><span class="t" style="left:645.30px;top:52px;font-size:8.7px;color:#3c3c3c;letter-spacing:-0.356px;">Cell</span><span class="t" style="left:638.00px;top:64px;font-size:8.7px;color:#3c3c3c;letter-spacing:-0.394px;">Styles</span><span class="t" style="left:685.80px;top:52px;font-size:8.7px;color:#3c3c3c;letter-spacing:-0.107px;">Insert</span><span class="t" style="left:715.80px;top:52px;font-size:8.7px;color:#3c3c3c;letter-spacing:-0.184px;">Delete</span><span class="t" style="left:745.50px;top:52px;font-size:8.8px;color:#3c3c3c;letter-spacing:-0.009px;">Format</span><span class="t" style="left:804.00px;top:27px;font-size:9.0px;color:#3c3c3c;letter-spacing:-0.013px;">AutoSum</span><span class="t" style="left:804.00px;top:44px;font-size:8.7px;color:#3c3c3c;letter-spacing:-0.270px;">Fill</span><span class="t" style="left:804.00px;top:61px;font-size:8.7px;color:#3c3c3c;letter-spacing:-0.419px;">Clear</span><span class="t" style="left:858.80px;top:52px;font-size:9.3px;color:#3c3c3c;">Sort &amp;</span><span class="t" style="left:858.80px;top:64px;font-size:8.7px;color:#3c3c3c;letter-spacing:-0.042px;">Filter</span><span class="t" style="left:890.60px;top:52px;font-size:9.1px;color:#3c3c3c;letter-spacing:0.005px;">Find &amp;</span><span class="t" style="left:889.10px;top:64px;font-size:8.7px;color:#3c3c3c;letter-spacing:-0.212px;">Select</span><span class="t" style="left:72.27px;top:55px;font-size:10.6px;color:#3c3c3c;font-weight:700;">B</span><span class="t" style="left:91.10px;top:53px;font-size:12px;color:#3c3c3c;font-style:italic;font-family:'Liberation Serif',serif;">I</span><span class="t" style="left:106.52px;top:56px;font-size:10.2px;color:#3c3c3c;">U</span><span class="t" style="left:457.80px;top:54px;font-size:11.7px;color:#3c3c3c;">%</span></div></div>
<div class="formula-bar"><span class="t" style="left:-1.50px;top:101px;font-size:9.4px;color:#333;letter-spacing:-0.005px;">K4</span><span class="t" style="left:188.32px;top:102px;font-size:9.8px;color:#222;">1</span><span class="t" style="left:159.40px;top:101px;font-size:11.9px;color:#3a3a3a;letter-spacing:-0.198px;font-style:italic;font-family:'Liberation Serif',serif;">fx</span></div>
</div>
<svg class="icons" width="960" height="450" viewBox="0 0 960 450">
<line x1="61.7" y1="22.3" x2="61.7" y2="85.3" stroke="#d6d6d6" stroke-width="0.9"/>
<line x1="220.9" y1="22.3" x2="220.9" y2="85.3" stroke="#d6d6d6" stroke-width="0.9"/>
<line x1="422" y1="22.3" x2="422" y2="85.3" stroke="#d6d6d6" stroke-width="0.9"/>
<line x1="531.5" y1="22.3" x2="531.5" y2="85.3" stroke="#d6d6d6" stroke-width="0.9"/>
<line x1="674.5" y1="22.3" x2="674.5" y2="85.3" stroke="#d6d6d6" stroke-width="0.9"/>
<line x1="781.8" y1="22.3" x2="781.8" y2="85.3" stroke="#d6d6d6" stroke-width="0.9"/>
<line x1="926.3" y1="22.3" x2="926.3" y2="85.3" stroke="#d6d6d6" stroke-width="0.9"/>
<line x1="130.3" y1="52.3" x2="130.3" y2="66.7" stroke="#dadada" stroke-width="0.9"/>
<line x1="160.3" y1="52.3" x2="160.3" y2="66.7" stroke="#dadada" stroke-width="0.9"/>
<line x1="280.2" y1="30" x2="280.2" y2="43" stroke="#dadada" stroke-width="0.9"/>
<line x1="280.2" y1="52.3" x2="280.2" y2="66.7" stroke="#dadada" stroke-width="0.9"/>
<line x1="318.3" y1="27" x2="318.3" y2="69" stroke="#dadada" stroke-width="0.9"/>
<line x1="490.4" y1="52.3" x2="490.4" y2="66.7" stroke="#dadada" stroke-width="0.9"/>
<g stroke="#777" stroke-width="0.8" fill="none"><path d="M53.6 84.8V80.2H58.2"/><path d="M55.800000000000004 82.4L58.6 85.2M58.6 82.8V85.2H56.2"/></g>
<g stroke="#777" stroke-width="0.8" fill="none"><path d="M212.6 84.8V80.2H217.2"/><path d="M214.79999999999998 82.4L217.6 85.2M217.6 82.8V85.2H215.2"/></g>
<g stroke="#777" stroke-width="0.8" fill="none"><path d="M413.4 84.8V80.2H418.0"/><path d="M415.59999999999997 82.4L418.4 85.2M418.4 82.8V85.2H416.0"/></g>
<g stroke="#777" stroke-width="0.8" fill="none"><path d="M523.0 84.8V80.2H527.6"/><path d="M525.2 82.4L528.0 85.2M528.0 82.8V85.2H525.6"/></g>
<path d="M946 85.4l4.2-3.9 4.2 3.9" fill="none" stroke="#555" stroke-width="0.9"/>
<path d="M48.80 47.35h3.4l-1.7 1.9z" fill="#555"/>
<path d="M139.30 35.25h3.4l-1.7 1.9z" fill="#555"/>
<path d="M173.30 35.25h3.4l-1.7 1.9z" fill="#555"/>
<path d="M121.30 59.05h3.4l-1.7 1.9z" fill="#555"/>
<path d="M151.60 59.05h3.4l-1.7 1.9z" fill="#555"/>
<path d="M181.80 59.05h3.4l-1.7 1.9z" fill="#555"/>
<path d="M208.60 59.05h3.4l-1.7 1.9z" fill="#555"/>
<path d="M299.50 35.25h3.4l-1.7 1.9z" fill="#555"/>
<path d="M409.10 59.25h3.4l-1.7 1.9z" fill="#555"/>
<path d="M518.60 35.25h3.4l-1.7 1.9z" fill="#555"/>
<path d="M447.50 59.05h3.4l-1.7 1.9z" fill="#555"/>
<path d="M587.10 67.35h3.4l-1.7 1.9z" fill="#555"/>
<path d="M623.80 67.35h3.4l-1.7 1.9z" fill="#555"/>
<path d="M663.00 67.35h3.4l-1.7 1.9z" fill="#555"/>
<path d="M694.60 66.85h3.4l-1.7 1.9z" fill="#555"/>
<path d="M726.10 66.85h3.4l-1.7 1.9z" fill="#555"/>
<path d="M757.80 66.85h3.4l-1.7 1.9z" fill="#555"/>
<path d="M849.00 29.65h3.4l-1.7 1.9z" fill="#555"/>
<path d="M817.30 46.95h3.4l-1.7 1.9z" fill="#555"/>
<path d="M826.70 64.15h3.4l-1.7 1.9z" fill="#555"/>
<path d="M880.90 67.35h3.4l-1.7 1.9z" fill="#555"/>
<path d="M915.20 67.35h3.4l-1.7 1.9z" fill="#555"/>
<path d="M12.60 66.45h3.4l-1.7 1.9z" fill="#bdbdbd"/>
<path d="M63.60 104.30h3.2l-1.6 1.8z" fill="#666"/>
<g fill="none" stroke="#fff" stroke-width="0.9"><path d="M424.3 10.3c-1.6-1.3-2.2-2.4-2.2-3.7a4.3 4.3 0 0 1 8.6 0c0 1.3-.6 2.4-2.2 3.7v1.6h-4.2z"/><path d="M424.6 13.4h3.6"/></g>
<g fill="none" stroke="#fff" stroke-width="0.9"><circle cx="912" cy="7.2" r="3.2"/><path d="M906.5 14.8c.6-2.6 2.4-4.3 4.2-4.6"/><path d="M915.2 10.7v4.6M912.9 13h4.6"/></g>
<g><rect x="5.6" y="27.7" width="16.2" height="18.5" rx="0.8" fill="#ddd9dc"/><rect x="8.8" y="26.2" width="9.8" height="3.2" fill="#c9c6c8"/><rect x="12.2" y="24.9" width="3" height="2.2" fill="none" stroke="#c9c6c8" stroke-width="0.8"/><path d="M15.9 34.3h7.3l3.2 3.2v10.1h-10.5z" fill="#f6f1f6" stroke="#cfcbce" stroke-width="0.8"/><path d="M23.2 34.3v3.2h3.2" fill="none" stroke="#cfcbce" stroke-width="0.8"/></g>
<g fill="none"><path d="M34 25.500l5.200 7.200M40.200 25.500l-5.200 7.200" stroke="#4a4a4a" stroke-width="1.250"/><ellipse cx="34.300" cy="33.700" rx="2.100" ry="1.800" stroke="#4a8fd0" stroke-width="1"/><ellipse cx="40" cy="33.700" rx="2.100" ry="1.800" stroke="#4a8fd0" stroke-width="1"/></g>
<g stroke="#6a6a6a" stroke-width="0.8" fill="#fff"><path d="M32.7 42.5h3.4l2 2v5.4h-5.4z"/><path d="M36.8 45.6h3.9l2.2 2.2v5.5h-6.1z"/></g><g stroke="#5b9bd5" stroke-width="0.7"><path d="M33.8 45.6h2M33.8 47.2h2M38 49h3.4M38 50.6h3.4"/></g>
<path d="M40.300 63.400l2.900-2.300" stroke="#3b3b3b" stroke-width="2.700" stroke-linecap="round"/><path d="M37.700 62.700l2.600 3.500" stroke="#777" stroke-width="1.300"/><path d="M32.600 65.700l4.700-3.100 2.600 3.700-3.700 3.300z" fill="#e9b96e"/>
<text x="185" y="41" font-family="Liberation Sans,sans-serif" font-size="13.2" fill="#3c3c3c">A</text><path d="M192.2 32.8l1.5-1.9 1.5 1.9z" fill="#3f7fc4"/>
<text x="202" y="41" font-family="Liberation Sans,sans-serif" font-size="10.6" fill="#3c3c3c">A</text><path d="M209.4 31l1.5 1.9 1.5-1.9z" fill="#3f7fc4"/>
<line x1="106.6" y1="64.1" x2="113.8" y2="64.1" stroke="#3c3c3c" stroke-width="0.8"/>
<g fill="none" stroke="#777" stroke-width="0.8"><rect x="135.2" y="54" width="10.4" height="10.4"/><path d="M140.4 54v10.4M135.2 59.2h10.4"/></g>
<rect x="164.7" y="62.3" width="12.2" height="3.6" fill="#ffff00"/><g fill="#fff" stroke="#555" stroke-width="0.85"><path d="M166.600 58.400l4.300-4.300 4.400 4.400-4 3.400z"/><path d="M169 56.300v-2.100a1.500 1.500 0 0 1 3 0v1.100" fill="none"/></g><path d="M176.100 57c1 1.500 1.500 2.400 1.500 3.200a1.300 1.300 0 0 1-2.600 0c0-.8.400-1.700 1.100-3.200z" fill="#3f7fc4"/>
<text x="192.6" y="61.6" font-family="Liberation Sans,sans-serif" font-size="10.6" fill="#3c3c3c">A</text><rect x="191.3" y="62.3" width="12.5" height="3.6" fill="#e0161a"/>
<line x1="230.10" y1="30.30" x2="240.50" y2="30.30" stroke="#969696" stroke-width="1.0"/>
<line x1="231.04" y1="32.80" x2="239.56" y2="32.80" stroke="#969696" stroke-width="1.0"/>
<line x1="231.04" y1="35.30" x2="239.56" y2="35.30" stroke="#969696" stroke-width="1.0"/>
<line x1="248.14" y1="33.50" x2="256.66" y2="33.50" stroke="#969696" stroke-width="1.0"/>
<line x1="247.20" y1="36.00" x2="257.60" y2="36.00" stroke="#969696" stroke-width="1.0"/>
<line x1="248.14" y1="38.50" x2="256.66" y2="38.50" stroke="#969696" stroke-width="1.0"/>
<line x1="265.34" y1="36.50" x2="273.86" y2="36.50" stroke="#777" stroke-width="1.0"/>
<line x1="265.34" y1="39.00" x2="273.86" y2="39.00" stroke="#777" stroke-width="1.0"/>
<line x1="264.40" y1="41.50" x2="274.80" y2="41.50" stroke="#777" stroke-width="1.0"/>
<line x1="230.10" y1="53.90" x2="240.50" y2="53.90" stroke="#888" stroke-width="0.8"/>
<line x1="230.10" y1="56.05" x2="236.96" y2="56.05" stroke="#888" stroke-width="0.8"/>
<line x1="230.10" y1="58.20" x2="240.50" y2="58.20" stroke="#888" stroke-width="0.8"/>
<line x1="230.10" y1="60.35" x2="236.96" y2="60.35" stroke="#888" stroke-width="0.8"/>
<line x1="230.10" y1="62.50" x2="240.50" y2="62.50" stroke="#888" stroke-width="0.8"/>
<line x1="230.10" y1="64.65" x2="236.96" y2="64.65" stroke="#888" stroke-width="0.8"/>
<line x1="247.20" y1="53.90" x2="257.60" y2="53.90" stroke="#6c6c6c" stroke-width="0.8"/>
<line x1="248.97" y1="56.05" x2="255.83" y2="56.05" stroke="#6c6c6c" stroke-width="0.8"/>
<line x1="247.20" y1="58.20" x2="257.60" y2="58.20" stroke="#6c6c6c" stroke-width="0.8"/>
<line x1="248.97" y1="60.35" x2="255.83" y2="60.35" stroke="#6c6c6c" stroke-width="0.8"/>
<line x1="247.20" y1="62.50" x2="257.60" y2="62.50" stroke="#6c6c6c" stroke-width="0.8"/>
<line x1="248.97" y1="64.65" x2="255.83" y2="64.65" stroke="#6c6c6c" stroke-width="0.8"/>
<line x1="264.40" y1="53.90" x2="274.80" y2="53.90" stroke="#888" stroke-width="0.8"/>
<line x1="267.94" y1="56.05" x2="274.80" y2="56.05" stroke="#888" stroke-width="0.8"/>
<line x1="264.40" y1="58.20" x2="274.80" y2="58.20" stroke="#888" stroke-width="0.8"/>
<line x1="267.94" y1="60.35" x2="274.80" y2="60.35" stroke="#888" stroke-width="0.8"/>
<line x1="264.40" y1="62.50" x2="274.80" y2="62.50" stroke="#888" stroke-width="0.8"/>
<line x1="267.94" y1="64.65" x2="274.80" y2="64.65" stroke="#888" stroke-width="0.8"/>
<text x="0" y="0" transform="translate(286.4 38) rotate(-45)" font-family="Liberation Sans,sans-serif" font-size="7.4" fill="#4a4a4a">ab</text><path d="M288.800 40.800l6.200-6.200M295.200 34.400v2.900M295.200 34.400h-2.900" stroke="#666" stroke-width="0.9" fill="none"/>
<line x1="284.6" y1="53.90" x2="296.0" y2="53.90" stroke="#888" stroke-width="0.8"/>
<line x1="290.20000000000005" y1="56.05" x2="296.0" y2="56.05" stroke="#888" stroke-width="0.8"/>
<line x1="290.20000000000005" y1="58.20" x2="296.0" y2="58.20" stroke="#888" stroke-width="0.8"/>
<line x1="290.20000000000005" y1="60.35" x2="296.0" y2="60.35" stroke="#888" stroke-width="0.8"/>
<line x1="290.20000000000005" y1="62.50" x2="296.0" y2="62.50" stroke="#888" stroke-width="0.8"/>
<line x1="284.6" y1="64.65" x2="296.0" y2="64.65" stroke="#888" stroke-width="0.8"/>
<path d="M285.0 59.27h4.400M284.8 59.27l2.300-2.300M284.8 59.27l2.300 2.300" stroke="#2f74b8" stroke-width="1.400" fill="none"/>
<line x1="301.6" y1="53.90" x2="313.0" y2="53.90" stroke="#888" stroke-width="0.8"/>
<line x1="307.20000000000005" y1="56.05" x2="313.0" y2="56.05" stroke="#888" stroke-width="0.8"/>
<line x1="307.20000000000005" y1="58.20" x2="313.0" y2="58.20" stroke="#888" stroke-width="0.8"/>
<line x1="307.20000000000005" y1="60.35" x2="313.0" y2="60.35" stroke="#888" stroke-width="0.8"/>
<line x1="307.20000000000005" y1="62.50" x2="313.0" y2="62.50" stroke="#888" stroke-width="0.8"/>
<line x1="301.6" y1="64.65" x2="313.0" y2="64.65" stroke="#888" stroke-width="0.8"/>
<path d="M301.6 59.27h4.400M306.20000000000005 59.27l-2.300-2.300M306.20000000000005 59.27l-2.300 2.300" stroke="#2f74b8" stroke-width="1.400" fill="none"/>
<text x="325.800" y="35.900" font-family="Liberation Sans,sans-serif" font-size="7.300" fill="#444">ab</text><text x="325.800" y="41.300" font-family="Liberation Sans,sans-serif" font-size="7.300" fill="#444">c</text><path d="M334.6 37.4v1.8h-3.4M331.2 39.2l1.2-1.1M331.2 39.2l1.2 1.1" stroke="#3f7fc4" stroke-width="0.8" fill="none"/>
<g fill="#fff" stroke="#777" stroke-width="0.8"><rect x="324.2" y="53.3" width="11.4" height="11.6"/><path d="M324.2 56.4h11.4M324.2 61.8h11.4M329.9 53.3v3.1M329.9 61.8v3.1" fill="none"/></g><path d="M325.6 59.1h8.6M325.6 59.1l1.3-1.2M325.6 59.1l1.3 1.2M334.2 59.1l-1.3-1.2M334.2 59.1l-1.3 1.2" stroke="#3f7fc4" stroke-width="0.8" fill="none"/>
<rect x="430" y="54" width="12" height="5.800" fill="#2f74b8"/><ellipse cx="436" cy="56.900" rx="3" ry="1.900" fill="#fff"/><ellipse cx="436" cy="56.900" rx="1.200" ry="1" fill="#1f4e79"/><g fill="#f0c48a" stroke="#f3f3f3" stroke-width="0.4"><rect x="437.4" y="58.200" width="5" height="1.500"/><rect x="437.400" y="59.900" width="5" height="1.500"/><rect x="434.400" y="61.600" width="5.800" height="1.500"/><rect x="434.400" y="63.300" width="5.800" height="1.500"/></g>
<path d="M482.500 58.500c0 2.300-1.500 3.800-3.900 4.400l-.3-.9c1.200-.4 1.900-1.100 2-2a2.250 2.250 0 1 1 2.200-1.500z" fill="#3c3c3c"/>
<text x="500.3" y="59" font-family="Liberation Sans,sans-serif" font-size="6.8" fill="#444">.0</text><text x="496.6" y="65.100" font-family="Liberation Sans,sans-serif" font-size="6.8" fill="#444">.00</text><path d="M495.500 56.600h4.400M495.500 56.600l1.900-1.800M495.500 56.600l1.900 1.800" stroke="#2f74b8" stroke-width="1.100" fill="none"/>
<text x="513.500" y="59" font-family="Liberation Sans,sans-serif" font-size="6.8" fill="#444">.00</text><text x="517.500" y="65.100" font-family="Liberation Sans,sans-serif" font-size="6.8" fill="#444">.0</text><path d="M512.500 62.700h4.400M516.900 62.700l-1.900-1.800M516.900 62.700l-1.900 1.800" stroke="#2f74b8" stroke-width="1.100" fill="none"/>
<g><rect x="555.2" y="25.2" width="20" height="16.6" fill="#fff" stroke="#8a8a8a" stroke-width="0.7"/><path d="M555.2 29.3h20M555.2 33.5h20M555.2 37.6h20M561.6 25.2v16.6M568.4 25.2v16.6" stroke="#a8a8a8" stroke-width="0.6" fill="none"/><rect x="561.9" y="25.5" width="3.2" height="3.6" fill="#d9603b"/><rect x="561.9" y="29.6" width="5.4" height="3.6" fill="#3f7fc4"/><rect x="561.9" y="33.8" width="4.2" height="3.6" fill="#d9603b"/><rect x="561.9" y="37.9" width="2.4" height="3.6" fill="#3f7fc4"/><rect x="567.4" y="39.2" width="10.4" height="7.6" fill="#fff" stroke="#8a8a8a" stroke-width="0.7"/><path d="M570.4 42.2h4.4M570.4 44h4.4M574 40.8l-2.8 4.6" stroke="#555" stroke-width="0.6"/></g>
<rect x="604.4" y="26.0" width="20.4" height="16.8" fill="#fff" stroke="#9a9a9a" stroke-width="0.7"/>
<rect x="609.6" y="29.4" width="15.2" height="13.4" fill="#c9dcf0"/>
<path d="M604.4 29.4h20.4M604.4 33.8h20.4M604.4 38.2h20.4M609.6 26.0v16.8M614.6 26.0v16.8M619.6 26.0v16.8" stroke="#a8b4c2" stroke-width="0.6" fill="none"/>
<path d="M626.8 31.4l1.6 1.4-6.2 8.4-2.4-1.8z" fill="#6e6e6e"/>
<path d="M610.0 47.4C613.0 46.8 615.1999999999999 45.0 616.4 42.2C617.6 39.8 620.4 39.6 621.6 41.4C622.8 43.4 621.8 45.6 619.6 46.4C616.6 47.6 613.0 47.8 610.0 47.4z" fill="#2f74b8" stroke="#f3f3f3" stroke-width="0.7"/><circle cx="619.0" cy="42.4" r="1.5" fill="#fff"/>
<rect x="641.5" y="26.0" width="20.4" height="16.8" fill="#fff" stroke="#9a9a9a" stroke-width="0.7"/>
<path d="M641.5 29.4h20.4M641.5 39.4h20.4M644.9 26.0v16.8M658.5 26.0v16.8" stroke="#b4b4b4" stroke-width="0.6" fill="none"/>
<rect x="645.3" y="29.8" width="12.8" height="9.2" fill="#c9dcf0"/>
<path d="M663.9 31.4l1.6 1.4-6.2 8.4-2.4-1.8z" fill="#6e6e6e"/>
<path d="M647.1 47.4C650.1 46.8 652.3 45.0 653.5 42.2C654.7 39.8 657.5 39.6 658.7 41.4C659.9 43.4 658.9 45.6 656.7 46.4C653.7 47.6 650.1 47.8 647.1 47.4z" fill="#2f74b8" stroke="#f3f3f3" stroke-width="0.7"/><circle cx="656.1" cy="42.4" r="1.5" fill="#fff"/>
<g fill="#fff" stroke="#8a8a8a" stroke-width="0.7"><rect x="688.4" y="25.3" width="10.4" height="3.8"/><rect x="688.4" y="38.4" width="10.4" height="7.8"/><path d="M693.6 25.3v3.8M693.6 38.4v7.800M688.4 42.300h10.4" fill="none"/></g><rect x="696.2" y="31.6" width="10.6" height="3.8" fill="#c9dcf0" stroke="#7f9fc2" stroke-width="0.7"/><path d="M701.5 31.600v3.800" stroke="#7f9fc2" stroke-width="0.6"/><path d="M686.200 33.700h7.600M685.800 33.700l3-2.800M685.800 33.700l3 2.800" stroke="#2f74b8" stroke-width="1.5" fill="none"/>
<g fill="#fff" stroke="#8a8a8a" stroke-width="0.7"><rect x="718.6" y="25.3" width="10.6" height="3.8"/><rect x="718.6" y="38.4" width="10.6" height="7.8"/><path d="M723.9 25.3v3.8M723.9 38.4v7.800M718.600 42.300h10.600" fill="none"/></g><rect x="722" y="31.6" width="7.600" height="3.800" fill="#c9dcf0" stroke="#7f9fc2" stroke-width="0.7"/><path d="M728.400 30l11.200 9.200M739.600 30l-11.200 9.200" stroke="#d9552c" stroke-width="1.4"/>
<path d="M752.4 26.5h11.600" stroke="#2f74b8" stroke-width="1.1" fill="none"/><path d="M750.2 26.5l3-2.300v4.600zM766.200 26.500l-3-2.300v4.600z" fill="#2f74b8"/><path d="M748.900 24.400v4M767.600 24.400v4" stroke="#9ab4d2" stroke-width="0.7" stroke-dasharray="1 0.8"/><g fill="#fff" stroke="#9a9a9a" stroke-width="0.7"><path d="M751.6 44.800v2.400h6v-2.400M758.800 44.800v2.400h6.400v-2.400"/><rect x="748.8" y="29.500" width="21" height="15.500" rx="0.8"/><path d="M748.800 34h21M748.800 40.600h21M754.100 29.500v15.500M760.300 29.500v15.500M765.500 29.500v15.500" fill="none" stroke="#c2c2c2" stroke-width="0.6"/></g><rect x="754.1" y="34" width="6.200" height="6.600" fill="#2f74b8"/>
<path d="M799.4 26.800v-1.300h-8.200l4.300 4.500-4.300 4.500h8.200v-1.300" fill="none" stroke="#333" stroke-width="1.3"/>
<rect x="790.6" y="43.200" width="9.400" height="9.400" fill="#fff" stroke="#8a8a8a" stroke-width="0.8"/><line x1="790.2" y1="41.500" x2="800.4" y2="41.500" stroke="#555" stroke-width="1"/><path d="M795.300 44.800v5.600M795.300 50.600l-2.200-2.200M795.300 50.600l2.200-2.200" stroke="#2f74b8" stroke-width="1" fill="none"/>
<path d="M791 65.600l5.800-6.200 3.600 3.200-5.800 6.200z" fill="#e8728a"/><path d="M791 65.600l1.900-2 3.600 3.200-1.900 2z" fill="#f2a7b6"/>
<text x="860.8" y="33.8" font-family="Liberation Sans,sans-serif" font-size="11.600" fill="#2f74b8" stroke="#2f74b8" stroke-width="0.25">A</text><text x="861.4" y="44.600" font-family="Liberation Sans,sans-serif" font-size="11.200" fill="#8e4bb0" stroke="#8e4bb0" stroke-width="0.25">Z</text><path d="M871.400 30.600h11.400l-4.600 4.800v5.400l-2.200-1.400v-4z" fill="#777"/>
<circle cx="906.2" cy="33.600" r="7.300" fill="none" stroke="#3f78b5" stroke-width="1.700"/><path d="M900.800 39.200l-5.600 5.800" stroke="#3f78b5" stroke-width="2.700" stroke-linecap="round"/>
<g fill="#9a9a9a"><circle cx="83.3" cy="102.200" r="0.550"/><circle cx="83.3" cy="105.200" r="0.550"/><circle cx="83.3" cy="108.200" r="0.550"/></g>
<path d="M105 101l8.200 8.200M113.200 101l-8.200 8.200" stroke="#b4b4b4" stroke-width="1.15" fill="none"/>
<path d="M132.200 105.600l3 3.200 6.200-7.600" stroke="#b4b4b4" stroke-width="1.2" fill="none"/>
<path d="M947 104.600l2.800 2.800 2.800-2.800" stroke="#444" stroke-width="1.300" fill="none"/>
<path d="M15 124.800v11.400h-12.800z" fill="#b4b4b4"/>
<rect x="946.100" y="122.900" width="12" height="11" fill="#fff" stroke="#cfcfcf" stroke-width="0.700"/><path d="M949.400 130.100l2.800-2.800 2.800 2.800z" fill="#666"/>
<rect x="946.100" y="135.400" width="12" height="258.200" fill="#fff" stroke="#cfcfcf" stroke-width="0.700"/>
<rect x="946.100" y="440.800" width="12" height="11" fill="#fff" stroke="#cfcfcf" stroke-width="0.700"/><path d="M949.300 444.600l2.800 2.800 2.800-2.800z" fill="#666"/>
</svg>
</div>
</body></html>
